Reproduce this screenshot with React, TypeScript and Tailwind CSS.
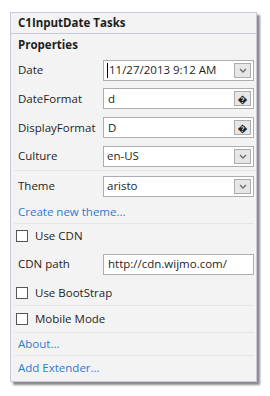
import React from "react";

const font = { fontFamily: '"Segoe UI", "Open Sans", "Noto Sans", sans-serif' };

function Row({ label, children, className = "" }: { label: string; children: React.ReactNode; className?: string }) {
  return (
    <div className={`flex items-center pl-[7px] pr-[2px] ${className}`}>
      <div className="w-[85px] shrink-0">{label}</div>
      {children}
    </div>
  );
}

function Combo({ value, caret }: { value: string; caret?: boolean }) {
  return (
    <div className="flex-1 h-[21px] bg-white border border-[#abadb3] flex items-center pl-[3px] pr-[2px]">
      {caret && <span className="w-px h-[15px] bg-black mr-[1px]" />}
      <span className="flex-1 truncate">{value}</span>
      <span className="w-[17px] h-[15px] bg-[#e6e6e6] border border-[#acacac] flex items-center justify-center">
        <svg width="8" height="5" viewBox="0 0 8 5">
          <path d="M1 1 L4 4 L7 1" stroke="#6d6d6d" strokeWidth="1.4" fill="none" />
        </svg>
      </span>
    </div>
  );
}

function Picker({ value }: { value: string }) {
  return (
    <div className="flex-1 h-[21px] bg-white border border-[#abadb3] flex items-center pl-[4px] pr-[2px]">
      <span className="flex-1">{value}</span>
      <span className="w-[17px] h-[15px] bg-[#e6e6e6] border border-[#acacac] flex items-center justify-center text-[10px] leading-none">
        {"\uFFFD"}
      </span>
    </div>
  );
}

function Check({ label, className = "" }: { label: string; className?: string }) {
  return (
    <div className={`flex items-center pl-[5px] ${className}`}>
      <span className="w-[12px] h-[12px] border border-[#555] bg-white mr-[7px]" />
      {label}
    </div>
  );
}

export default function App() {
  return (
    <div className="w-[270px] h-[396px] bg-white pt-[12px] pl-[10px]" style={font}>
      <div className="w-[247px] h-[370px] bg-[#f3f3f3] border border-[#c8c8dc] shadow-[3px_3px_2px_rgba(0,0,0,0.45)] text-[11.5px] text-[#1e1e1e] flex flex-col">
        <div className="h-[21px] flex items-center px-[7px] font-bold text-[11.5px] border-b border-[#c8c8dc]">
          C1InputDate Tasks
        </div>
        <div className="h-[22px] flex items-center px-[7px] font-bold">Properties</div>
        <div className="pl-0">
          <Row label="Date" className="h-[28px]">
            <Combo value="11/27/2013 9:12 AM" caret />
          </Row>
          <Row label="DateFormat" className="h-[29px]">
            <Picker value="d" />
          </Row>
          <Row label="DisplayFormat" className="h-[29px]">
            <Picker value="D" />
          </Row>
          <Row label="Culture" className="h-[29px] border-b border-[#e4e4e4] ml-[3px] !pl-[4px]">
            <Combo value="en-US" />
          </Row>
          <Row label="Theme" className="h-[30px]">
            <Combo value="aristo" />
          </Row>
          <div className="h-[23px] flex items-center px-[7px] text-[#2b7bd6] border-b border-[#e4e4e4] ml-[3px] mr-[2px] !pl-[4px]">
            Create new theme...
          </div>
          <Check label="Use CDN" className="h-[24px]" />
          <Row label="CDN path" className="h-[32px]">
            <div className="flex-1 h-[21px] bg-white border border-[#abadb3] flex items-center pl-[4px]">
              http://cdn.wijmo.com/
            </div>
          </Row>
          <Check label="Use BootStrap" className="h-[26px] border-b border-[#e4e4e4] ml-[3px] mr-[2px] !pl-[2px]" />
          <Check label="Mobile Mode" className="h-[27px] border-b border-[#e4e4e4] ml-[3px] mr-[2px] !pl-[2px]" />
          <div className="h-[23px] flex items-center pl-[4px] ml-[3px] mr-[2px] text-[#2b7bd6] border-b border-[#e4e4e4]">
            About...
          </div>
          <div className="h-[24px] flex items-center px-[7px] text-[#2b7bd6]">Add Extender...</div>
        </div>
      </div>
    </div>
  );
}
